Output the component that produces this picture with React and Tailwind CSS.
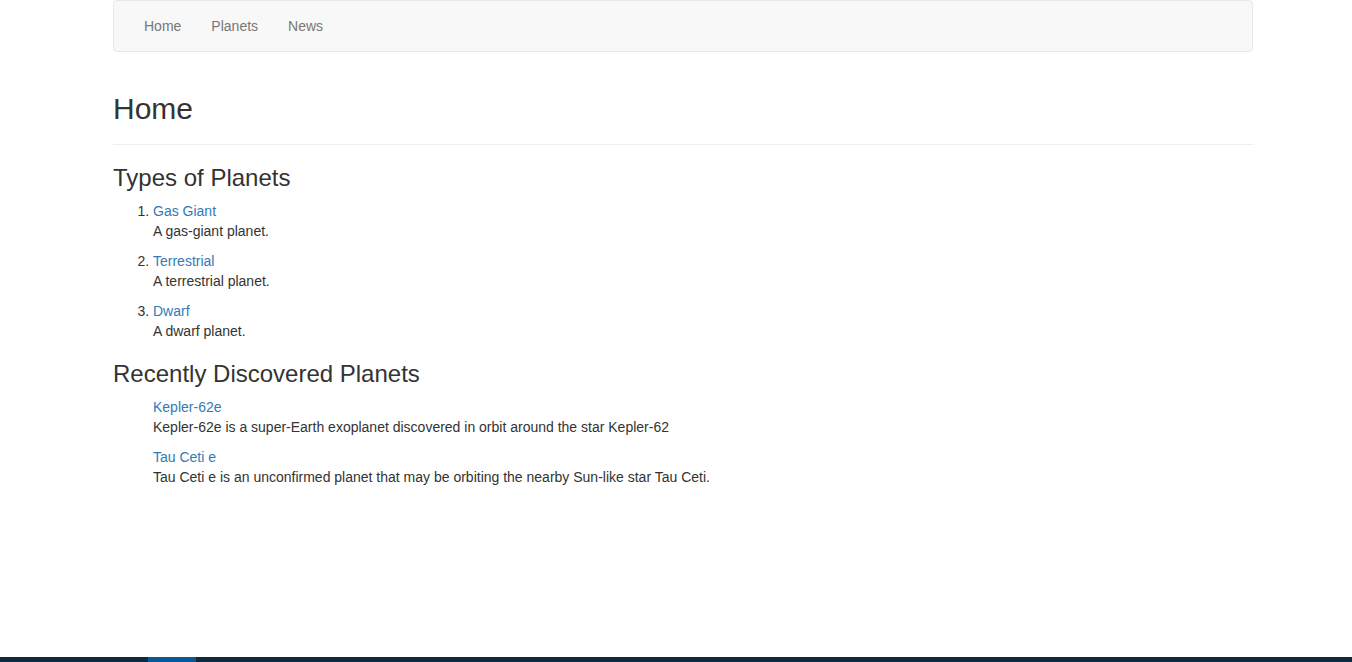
export default function App() {
  const types = [
    { name: "Gas Giant", text: "A gas-giant planet." },
    { name: "Terrestrial", text: "A terrestrial planet." },
    { name: "Dwarf", text: "A dwarf planet." },
  ];
  const recent = [
    { name: "Kepler-62e", text: "Kepler-62e is a super-Earth exoplanet discovered in orbit around the star Kepler-62" },
    { name: "Tau Ceti e", text: "Tau Ceti e is an unconfirmed planet that may be orbiting the nearby Sun-like star Tau Ceti." },
  ];

  return (
    <div
      className="flex min-h-screen flex-col bg-white text-[14px] leading-[20px] text-[#333]"
      style={{ fontFamily: '"Liberation Sans", Arial, sans-serif' }}
    >
      <div className="ml-[113px] w-[1140px] grow">
        {/* Navbar */}
        <nav className="h-[52px] rounded-[4px] border border-[#e7e7e7] bg-[#f8f8f8] px-[15px]">
          <ul className="flex">
            {["Home", "Planets", "News"].map((l) => (
              <li key={l}>
                <a href="#" className="block px-[15px] py-[15px] text-[#777]">
                  {l}
                </a>
              </li>
            ))}
          </ul>
        </nav>

        {/* Page header */}
        <div className="mt-[40px] mb-[20px] border-b border-[#eee] pb-[9px]">
          <h1 className="mb-[10px] text-[30px] leading-[33px] font-normal">Home</h1>
        </div>

        <h3 className="mb-[10px] text-[24px] leading-[26px] font-normal">Types of Planets</h3>
        <ol className="list-decimal pl-[40px]">
          {types.map((t) => (
            <li key={t.name}>
              <a href="#" className="text-[#337ab7]">
                {t.name}
              </a>
              <p className="mb-[10px]">{t.text}</p>
            </li>
          ))}
        </ol>

        <h3 className="mt-[20px] mb-[10px] text-[24px] leading-[26px] font-normal">
          Recently Discovered Planets
        </h3>
        <ul className="list-none pl-[40px]">
          {recent.map((t) => (
            <li key={t.name}>
              <a href="#" className="text-[#337ab7]">
                {t.name}
              </a>
              <p className="mb-[10px]">{t.text}</p>
            </li>
          ))}
        </ul>
      </div>

      {/* Footer strip */}
      <div className="flex h-[5px] bg-[#0e2a3e]">
        <div className="ml-[148px] w-[48px] bg-[#0b5896]" />
      </div>
    </div>
  );
}
